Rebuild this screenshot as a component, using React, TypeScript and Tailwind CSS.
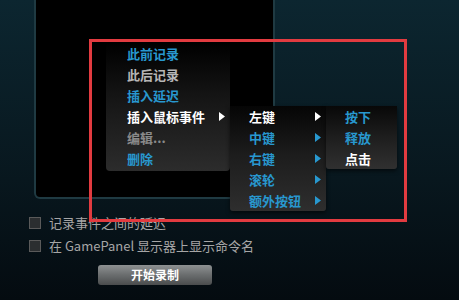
import React from "react";

const font = { fontFamily: '"Noto Sans CJK SC", "Noto Sans", sans-serif' };

function Arrow({ color }: { color: string }) {
  return (
    <svg width="6" height="9" viewBox="0 0 6 9" className="shrink-0">
      <polygon points="0,0 6,4.5 0,9" fill={color} />
    </svg>
  );
}

type Item = { label: string; color: string; arrow?: boolean };

function Menu({
  items,
  className,
  pl,
  arrowRight,
}: {
  items: Item[];
  className: string;
  pl: string;
  arrowRight: string;
}) {
  return (
    <div className={className} style={font}>
      {items.map((it) => (
        <div key={it.label} className={`flex h-[21px] items-center justify-between ${pl} ${arrowRight}`}>
          <span className="text-[13px] font-bold leading-none" style={{ color: it.color }}>
            {it.label}
          </span>
          {it.arrow && <Arrow color={it.color === "#ffffff" ? "#ffffff" : "#2898cf"} />}
        </div>
      ))}
    </div>
  );
}

export default function App() {
  const blue = "#2898cf";
  return (
    <div
      className="relative h-[300px] w-[459px] overflow-hidden bg-[linear-gradient(180deg,#0c2630_0%,#08171e_60%,#040b10_100%)]"
      style={font}
    >
      <div className="flex flex-col">
        <div className="ml-[34px] h-[199px] w-[241px] rounded-b-[6px] border-x-2 border-b-2 border-[#1f3a42] bg-black" />
        <div className="ml-[29px] mt-[17px] flex flex-col gap-[10px]">
          <div className="flex items-center gap-[8px]">
            <div className="h-[12px] w-[12px] border border-[#5a5a5a] bg-[#2b2e30]" />
            <span className="text-[13px] leading-none text-[#a6a6a6]">记录事件之间的延迟</span>
          </div>
          <div className="flex items-center gap-[8px]">
            <div className="h-[12px] w-[12px] border border-[#5a5a5a] bg-[#2b2e30]" />
            <span className="text-[13px] leading-none text-[#a6a6a6]">在 GamePanel 显示器上显示命令名</span>
          </div>
        </div>
        <div className="ml-[98px] mt-[13px] flex h-[20px] w-[114px] items-center justify-center rounded-[3px] bg-[linear-gradient(180deg,#8e9192_0%,#6a6d6e_50%,#4a4c4d_100%)]">
          <span className="text-[12px] font-bold leading-none text-white">开始录制</span>
        </div>
      </div>

      {/* main context menu */}
      <Menu
        className="absolute left-[106px] top-[43px] w-[124px] rounded-b-[4px] bg-[linear-gradient(180deg,#000000_0%,#141414_40%,#2c2c2c_100%)] pb-[2px] shadow-[0_2px_4px_rgba(0,0,0,0.6)]"
        pl="pl-[21px]"
        arrowRight="pr-[5px]"
        items={[
          { label: "此前记录", color: blue },
          { label: "此后记录", color: "#b6b6b6" },
          { label: "插入延迟", color: blue },
          { label: "插入鼠标事件", color: "#ffffff", arrow: true },
          { label: "编辑...", color: "#8a8a8a" },
          { label: "删除", color: blue },
        ]}
      />

      {/* submenu 1 */}
      <Menu
        className="absolute left-[230px] top-[106px] w-[96px] rounded-b-[3px] bg-[linear-gradient(180deg,#050505_0%,#1c1c1c_45%,#2e2e2e_100%)] shadow-[0_2px_4px_rgba(0,0,0,0.6)]"
        pl="pl-[19px]"
        arrowRight="pr-[5px]"
        items={[
          { label: "左键", color: "#ffffff", arrow: true },
          { label: "中键", color: blue, arrow: true },
          { label: "右键", color: blue, arrow: true },
          { label: "滚轮", color: blue, arrow: true },
          { label: "额外按钮", color: blue, arrow: true },
        ]}
      />

      {/* submenu 2 */}
      <Menu
        className="absolute left-[326px] top-[106px] w-[71px] rounded-b-[3px] bg-[linear-gradient(180deg,#080808_0%,#1e1e1e_50%,#303030_100%)] shadow-[0_2px_4px_rgba(0,0,0,0.6)]"
        pl="pl-[19px]"
        arrowRight="pr-[5px]"
        items={[
          { label: "按下", color: blue },
          { label: "释放", color: blue },
          { label: "点击", color: "#ffffff" },
        ]}
      />

      {/* red highlight box */}
      <div className="pointer-events-none absolute left-[89px] top-[39px] h-[183px] w-[318px] border-[3px] border-[#e23b40]" />
    </div>
  );
}
